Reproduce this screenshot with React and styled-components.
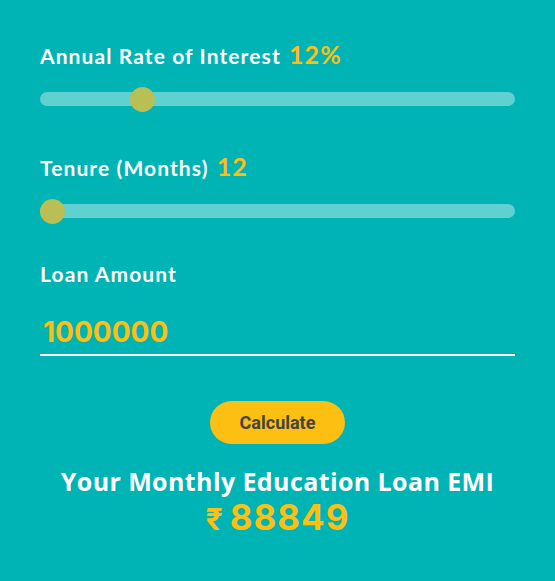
import React, { useState } from 'react';
import styled, { createGlobalStyle } from 'styled-components';

const TEAL = '#00b3b5';
const YELLOW = '#fdbf12';
const THUMB = '#b9bf54';

const GlobalStyle = createGlobalStyle`
  html, body {
    margin: 0;
    padding: 0;
    background: ${TEAL};
  }
  * {
    box-sizing: border-box;
  }
`;

const Wrapper = styled.div`
  min-height: 581px;
  background: ${TEAL};
  padding: 39px 40px 0 40px;
  display: flex;
  flex-direction: column;
`;

const Field = styled.div`
  display: flex;
  flex-direction: column;
  margin-bottom: ${(props) => props.gap || 0}px;
`;

const Label = styled.div`
  font-family: 'Lato', sans-serif;
  font-weight: 700;
  font-size: 21px;
  line-height: 30px;
  color: white;
  letter-spacing: 1.1px;
`;

const Value = styled.span`
  color: ${YELLOW};
  font-size: 25px;
  margin-left: 2px;
`;

const Slider = styled.input`
  -webkit-appearance: none;
  appearance: none;
  width: 100%;
  height: 14px;
  margin: 21px 0 0 0;
  border-radius: 7px;
  background: rgba(255, 255, 255, 0.38);
  outline: none;
  &::-webkit-slider-thumb {
    -webkit-appearance: none;
    width: 25px;
    height: 25px;
    border-radius: 50%;
    background: ${THUMB};
    cursor: pointer;
  }
`;

const AmountInput = styled.input`
  width: 100%;
  border: 0;
  border-bottom: 2px solid white;
  background: transparent;
  outline: none;
  font-family: 'Inter', sans-serif;
  font-weight: 700;
  font-size: 28px;
  color: ${YELLOW};
  padding: 0 0 5px 3px;
  margin-top: 26px;
`;

const ButtonRow = styled.div`
  display: flex;
  justify-content: center;
  margin-top: 45px;
`;

const Button = styled.button`
  background: ${YELLOW};
  border: 0;
  border-radius: 22px;
  width: 135px;
  height: 43px;
  font-family: 'Roboto', sans-serif;
  font-weight: 700;
  font-size: 18px;
  color: #444;
  cursor: pointer;
`;

const Result = styled.div`
  margin-top: 22px;
  text-align: center;
  font-weight: 700;
`;

const ResultTitle = styled.div`
  font-family: 'Open Sans', sans-serif;
  color: white;
  font-size: 25px;
  line-height: 30px;
  letter-spacing: 0.4px;
`;

const ResultAmount = styled.div`
  font-family: 'Inter', sans-serif;
  color: ${YELLOW};
  font-size: 35px;
  line-height: 40px;
  letter-spacing: 1px;
  margin-top: 1px;
`;

const Rupee = styled.span`
  font-size: 30px;
  margin-right: 6px;
`;

const App = () => {
  const [rate, setRate] = useState(12);
  const [tenure, setTenure] = useState(12);
  const [amount, setAmount] = useState('1000000');

  return (
    <Wrapper>
      <GlobalStyle />
      <Field gap={45}>
        <Label>
          Annual Rate of Interest <Value>{rate}%</Value>
        </Label>
        <Slider
          type="range"
          min={5}
          max={40}
          value={rate}
          onChange={(e) => setRate(Number(e.target.value))}
        />
      </Field>
      <Field gap={41}>
        <Label>
          Tenure (Months) <Value>{tenure}</Value>
        </Label>
        <Slider
          type="range"
          min={12}
          max={84}
          value={tenure}
          onChange={(e) => setTenure(Number(e.target.value))}
        />
      </Field>
      <Field>
        <Label>Loan Amount</Label>
        <AmountInput value={amount} onChange={(e) => setAmount(e.target.value)} />
      </Field>
      <ButtonRow>
        <Button>Calculate</Button>
      </ButtonRow>
      <Result>
        <ResultTitle>Your Monthly Education Loan EMI</ResultTitle>
        <ResultAmount>
          <Rupee>₹</Rupee>88849
        </ResultAmount>
      </Result>
    </Wrapper>
  );
};

export default App;
